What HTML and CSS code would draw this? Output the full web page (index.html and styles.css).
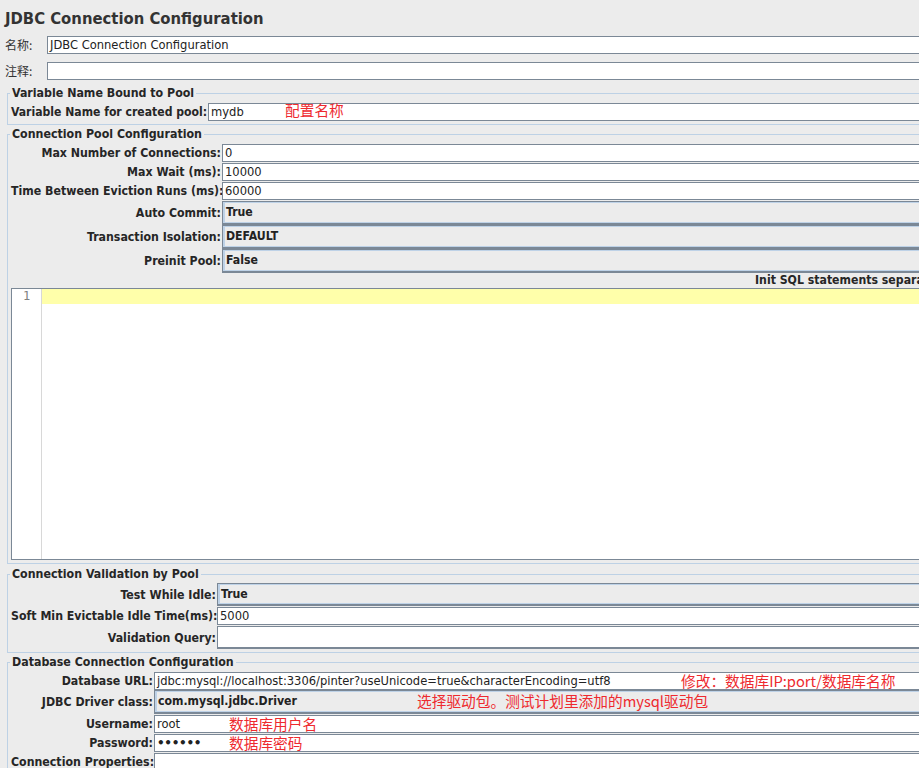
FILE: index.html
```html
<!DOCTYPE html>
<html lang="zh">
<head>
<meta charset="utf-8">
<title>JDBC Connection Configuration</title>
<link rel="stylesheet" href="styles.css">
</head>
<body>
<div class="page">
  <h1 class="title">JDBC Connection Configuration</h1>

  <div class="top-row">
    <span class="cn-label">名称:</span>
    <div class="field">JDBC Connection Configuration</div>
  </div>
  <div class="top-row">
    <span class="cn-label">注释:</span>
    <div class="field"></div>
  </div>

  <fieldset class="group g-var">
    <legend>Variable Name Bound to Pool</legend>
    <div class="frow">
      <span class="lbl">Variable Name for created pool:</span>
      <div class="field">mydb<span class="note note-var">配置名称</span></div>
    </div>
  </fieldset>

  <fieldset class="group g-pool">
    <legend>Connection Pool Configuration</legend>
    <div class="frow">
      <span class="lbl">Max Number of Connections:</span>
      <div class="field">0</div>
    </div>
    <div class="frow">
      <span class="lbl">Max Wait (ms):</span>
      <div class="field">10000</div>
    </div>
    <div class="frow">
      <span class="lbl">Time Between Eviction Runs (ms):</span>
      <div class="field">60000</div>
    </div>
    <div class="frow">
      <span class="lbl">Auto Commit:</span>
      <div class="combo">True</div>
    </div>
    <div class="frow">
      <span class="lbl">Transaction Isolation:</span>
      <div class="combo">DEFAULT</div>
    </div>
    <div class="frow">
      <span class="lbl">Preinit Pool:</span>
      <div class="combo">False</div>
    </div>
    <div class="editor-caption">Init SQL statements separated by new lines:</div>
    <div class="editor">
      <div class="gutter">1</div>
      <div class="code"><div class="current-line"></div></div>
    </div>
  </fieldset>

  <fieldset class="group g-valid">
    <legend>Connection Validation by Pool</legend>
    <div class="frow">
      <span class="lbl">Test While Idle:</span>
      <div class="combo combo-sm">True</div>
    </div>
    <div class="frow">
      <span class="lbl">Soft Min Evictable Idle Time(ms):</span>
      <div class="field">5000</div>
    </div>
    <div class="frow">
      <span class="lbl">Validation Query:</span>
      <div class="field field-tall"></div>
    </div>
  </fieldset>

  <fieldset class="group g-db">
    <legend>Database Connection Configuration</legend>
    <div class="frow">
      <span class="lbl">Database URL:</span>
      <div class="field">jdbc:mysql://localhost:3306/pinter?useUnicode=true&amp;characterEncoding=utf8<span class="note note-url">修改：数据库IP:port/数据库名称</span></div>
    </div>
    <div class="frow">
      <span class="lbl">JDBC Driver class:</span>
      <div class="combo">com.mysql.jdbc.Driver<span class="note note-driver">选择驱动包。测试计划里添加的mysql驱动包</span></div>
    </div>
    <div class="frow">
      <span class="lbl">Username:</span>
      <div class="field">root<span class="note note-user">数据库用户名</span></div>
    </div>
    <div class="frow">
      <span class="lbl">Password:</span>
      <div class="field password">••••••<span class="note note-user">数据库密码</span></div>
    </div>
    <div class="frow">
      <span class="lbl">Connection Properties:</span>
      <div class="field"></div>
    </div>
  </fieldset>
</div>
</body>
</html>
```

FILE: styles.css
```css
* { box-sizing: border-box; }

html, body {
  margin: 0;
  padding: 0;
}

body {
  background: #ececec;
  width: 919px;
  height: 768px;
  overflow: hidden;
  font-family: "DejaVu Sans Condensed", "DejaVu Sans", "Noto Sans CJK SC", sans-serif;
  font-stretch: condensed;
  color: #262626;
}

.page {
  width: 1000px;
}

.title {
  margin: 0;
  height: 36px;
  line-height: 37px;
  padding-left: 5px;
  font-size: 16.5px;
  font-weight: bold;
  color: #333;
}

.top-row {
  display: flex;
  height: 18px;
}

.top-row + .top-row {
  margin-top: 8px;
}

.cn-label {
  width: 47px;
  padding-left: 5px;
  font-family: "Noto Sans CJK SC", sans-serif;
  font-stretch: normal;
  font-size: 12px;
  line-height: 18px;
  color: #333;
}

.field {
  position: relative;
  flex: 1;
  height: 18px;
  background: #fff;
  border: 1px solid #7b8896;
  border-right: none;
  padding-left: 2px;
  font-size: 12.8px;
  line-height: 16px;
  white-space: nowrap;
  color: #222;
}

.field-tall {
  height: 23px;
  border-bottom-width: 2px;
}

.password {
  font-family: "DejaVu Sans", sans-serif;
  font-stretch: normal;
  font-size: 12px;
  font-weight: bold;
  letter-spacing: -0.3px;
}

.combo {
  position: relative;
  flex: 1;
  height: 24px;
  background: #ececec;
  border: 1px solid #7b8896;
  border-right: none;
  border-bottom-width: 2px;
  box-shadow: inset 2px 1px 0 #bed2e7, inset 0 -1px 0 #bed2e7;
  padding-left: 3px;
  font-size: 12.2px;
  font-weight: bold;
  line-height: 21px;
  white-space: nowrap;
  color: #222;
}

.combo-sm {
  height: 23px;
  line-height: 20px;
}

.group {
  margin: 0 0 0 7px;
  padding: 3px 0 3px 3px;
  border: 1px solid #bdd1e5;
  border-right: none;
  min-width: 0;
}

.group legend {
  margin-left: -1px;
  padding: 0 2px;
  font-size: 12.3px;
  font-weight: bold;
  line-height: 14px;
  color: #262626;
}

.g-var { margin-top: 6px; }
.g-pool { margin-top: 2px; }
.g-valid { margin-top: 3px; padding-top: 2px; }
.g-db { margin-top: 2px; }

.frow {
  display: flex;
  align-items: center;
  gap: 1px;
}

.frow + .frow {
  margin-top: 1px;
}

.frow:has(.combo) + .frow:has(.combo) {
  margin-top: 0;
}

.lbl {
  flex: none;
  text-align: right;
  font-size: 12.25px;
  font-weight: bold;
  white-space: nowrap;
  color: #262626;
}

.g-var .lbl { width: auto; font-size: 12.1px; }
.g-pool .lbl { width: 210px; }
.g-valid .lbl { width: 205px; }
.g-db .lbl { width: 142px; }

.g-db .frow:nth-child(3) { margin-top: 0; }

.editor-caption {
  height: 15px;
  padding-left: 744px;
  font-size: 12.2px;
  font-weight: bold;
  line-height: 14px;
  white-space: nowrap;
  color: #262626;
}

.editor {
  display: flex;
  height: 272px;
  background: #fff;
  border: 1px solid #7b8896;
  border-right: none;
}

.gutter {
  width: 30px;
  border-right: 1px solid #d8d8d8;
  text-align: center;
  font-family: "DejaVu Sans Mono", monospace;
  font-stretch: normal;
  font-size: 12px;
  line-height: 15px;
  color: #808080;
}

.code {
  flex: 1;
}

.current-line {
  height: 15px;
  background: #ffffaa;
}

.note {
  position: absolute;
  top: -1px;
  font-family: "Noto Sans CJK SC", sans-serif;
  font-stretch: normal;
  font-weight: normal;
  font-size: 14.7px;
  line-height: 17px;
  letter-spacing: 0;
  color: #ee2a2f;
  white-space: nowrap;
}

.note-var { left: 76px; top: -3px; }
.note-url { left: 526px; }
.note-driver { left: 262px; top: 1px; }
.note-user { left: 74px; }
```
